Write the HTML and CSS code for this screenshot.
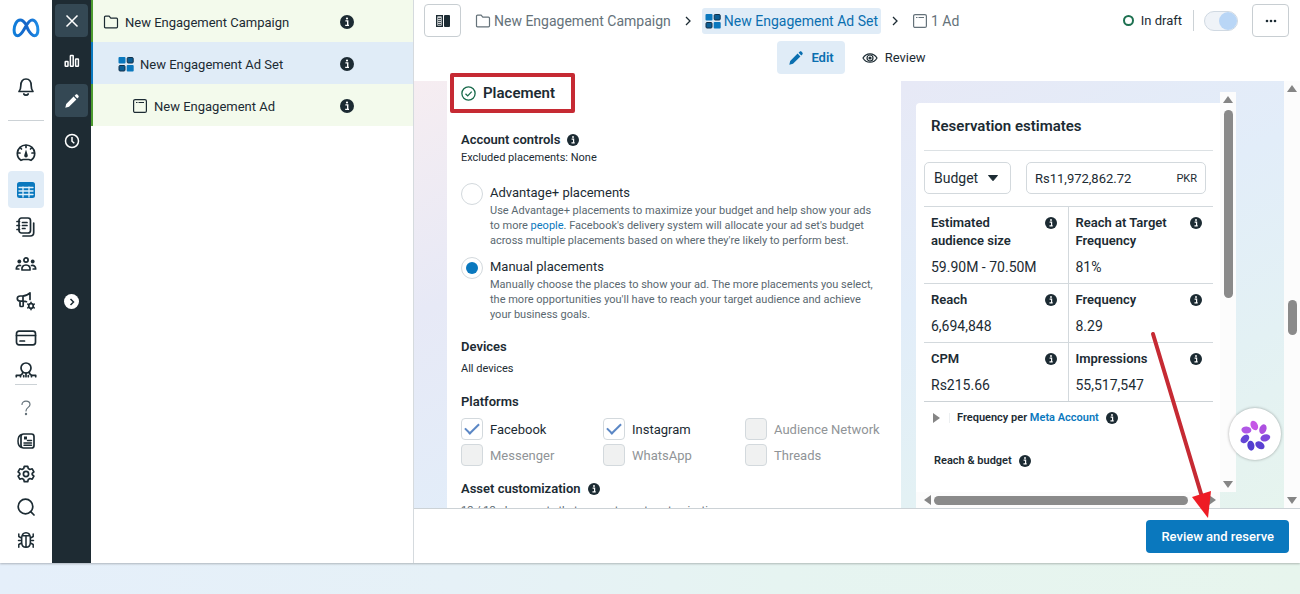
FILE: index.html
```html
<!DOCTYPE html>
<html lang="en">
  <head>
    <meta charset="UTF-8" />
    <title>Ads Manager - New Engagement Ad Set</title>
    <link rel="stylesheet" href="styles.css">
  </head>
  <body>
    <!-- shared icons -->
    <svg class="sprite" aria-hidden="true">
      <symbol id="i-info" viewBox="0 0 14 14">
        <circle cx="7" cy="7" r="7" fill="currentColor" />
        <path d="M5.4 5.9h2.3v4.3M5.2 10.4h3.8" fill="none" stroke="#fff" stroke-width="1.4" />
        <circle cx="7" cy="3.5" r="1.1" fill="#fff" />
      </symbol>
      <symbol id="i-folder" viewBox="0 0 16 16">
        <path d="M1.5 3.2c0-.7.4-1 1-1h3.600l1.700 2h5.700c.7 0 1 .4 1 1v7.600c0 .7-.4 1-1 1h-11c-.7 0-1-.4-1-1z" fill="none" stroke="currentColor" stroke-width="1.2" />
      </symbol>
      <symbol id="i-grid" viewBox="0 0 16 16">
        <rect x=".5" y="1" width="7" height="6.500" rx="1" fill="#0a78be" />
        <rect x="9.200" y="1.500" width="6" height="5.500" rx="1" fill="#0a5d94" stroke="#12304a" />
        <rect x="1" y="9.500" width="6" height="5.500" rx="1" fill="#0a5d94" stroke="#12304a" />
        <rect x="8.700" y="9" width="7" height="6.500" rx="1" fill="#0a78be" />
      </symbol>
      <symbol id="i-ad" viewBox="0 0 16 16">
        <rect x="1.600" y="1.600" width="12.800" height="12.800" rx="1.500" fill="none" stroke="currentColor" stroke-width="1.200" />
        <path d="M4 4.500h1.500M6.500 4.500H12" stroke="currentColor" stroke-width="1.200" />
      </symbol>
      <symbol id="i-pencil" viewBox="0 0 16 16">
        <path d="M1.300 14.700l.9-3.700 7.400-7.400 2.800 2.800L5 13.800zM10.600 2.700l1-1c.6-.6 1.400-.6 2 0l.7.7c.6.600.6 1.400 0 2l-1 1z" fill="currentColor" />
      </symbol>
    </svg>

    <div class="app">
      <nav class="rail" aria-label="Main">
        <a class="rail-logo" href="#" aria-label="Meta">
          <svg width="28" height="20" viewBox="0 0 28 20" fill="none" stroke-width="3" stroke-linecap="round">
            <defs>
              <linearGradient id="meta" x1="0" x2="1">
                <stop offset="0" stop-color="#1180dc" />
                <stop offset=".5" stop-color="#1663c7" />
                <stop offset="1" stop-color="#1d8ce6" />
              </linearGradient>
            </defs>
            <path d="M14 6.500C12.200 3.700 10.400 2 8.200 2 4.600 2 2.100 7.200 2.100 12c0 3.500 1.300 5.700 3.700 5.700 2.300 0 3.800-2 6.200-6.200l2-3.400c2.300-4 4-6.100 6.200-6.100 3.400 0 5.700 5 5.700 10 0 3.500-1.200 5.700-3.600 5.700-2.300 0-3.700-1.700-6.300-6.200z" stroke="url(#meta)" />
          </svg>
        </a>
        <a class="rail-bell" href="#" aria-label="Notifications">
          <svg width="20" height="20" viewBox="0 0 20 20"><path d="M3 14.500c1.400-1.500 1.800-3 1.800-5.700C4.800 4.500 6.800 2 10 2s5.200 2.500 5.200 6.800c0 2.700.4 4.200 1.800 5.700z" /><path d="M7.800 17c.8 1.600 3.600 1.600 4.400 0" /></svg>
        </a>
        <hr class="rail-line">
        <a class="rail-item" href="#" aria-label="Overview">
          <svg width="20" height="20" viewBox="0 0 20 20"><path d="M5 17.300c-2-1.300-3.700-3.600-3.700-7A8.600 8.600 0 0 1 10 2a8.600 8.600 0 0 1 8.700 8.300c0 3.400-1.700 5.700-3.700 7l-2.200-.8H7.200z" /><path d="M10 2.500v2M2 10h2M16 10h2M4.500 5l1 1M15.500 5l-1 1" /><path d="M10 6.500l1.700 5.500a1.800 1.800 0 1 1-3.400 0z" fill="currentColor" stroke="none" /></svg>
        </a>
        <a class="rail-item active" href="#" aria-label="Campaigns">
          <svg width="20" height="18" viewBox="0 0 20 18"><rect x="1" y="1" width="18" height="16" rx="2.500" fill="currentColor" stroke="none" /><path d="M3 6.500h14M3 10h14M3 13.500h14M7 6v10M13 6v10" stroke="#dff0fb" stroke-width="1.300" /></svg>
        </a>
        <a class="rail-item" href="#" aria-label="Reports">
          <svg width="20" height="20" viewBox="0 0 20 20"><rect x="3" y="1" width="11.500" height="15" rx="2.500" /><path d="M1 4.500h2.500M1 8.500h2.500M1 12.500h2.500M6.500 5.500H11M6.500 8.500H11M6.500 11.500H9M17.700 6v9.500c0 2.300-1.300 3.500-3.500 3.500H7" /></svg>
        </a>
        <a class="rail-item" href="#" aria-label="Audiences">
          <svg width="22" height="16" viewBox="0 0 22 16"><circle cx="11" cy="4" r="2.100" /><path d="M7 14c-.5-3 1-5 4-5s4.500 2 4 5z" /><circle cx="4.300" cy="5.500" r="1.900" fill="currentColor" stroke="none" /><circle cx="17.700" cy="5.500" r="1.900" fill="currentColor" stroke="none" /><path d="M5.500 9.500C3 9 1.300 10.300 1.300 13h2.500M16.500 9.500c2.500-.5 4.200.8 4.200 3.500h-2.500" /></svg>
        </a>
        <a class="rail-item" href="#" aria-label="Ads settings">
          <svg width="20" height="20" viewBox="0 0 20 20"><path d="M14 8.500V1.800C11.500 4.200 9.500 5 6.500 5H4.200C2.500 5 1.300 6 1.300 7.500s1.200 2.600 2.900 2.600h3.500c1 0 1.900.2 2.800.6M7 5v5M4 10.300v4.200c0 .7.500 1 1 1h1.200c.6 0 1-.4 1-1v-4.200" /><circle cx="15" cy="15" r="2.300" /><path d="M15 11.200v7.600M11.700 13.100l6.600 3.800M11.700 16.900l6.600-3.800" stroke-width="1.500" /><circle cx="15" cy="15" r="1.400" fill="#fff" stroke="none" /></svg>
        </a>
        <a class="rail-item" href="#" aria-label="Billing">
          <svg width="22" height="16" viewBox="0 0 22 16"><rect x="1.500" y="1.200" width="19" height="13.600" rx="2.500" /><path d="M1.500 5.500h19M5 11h4.500" /></svg>
        </a>
        <a class="rail-audience" href="#" aria-label="Insights">
          <svg width="22" height="18" viewBox="0 0 22 18"><circle cx="11" cy="7" r="5" /><path d="M1.300 15.700v-1.400h3.200c1.800 0 2.800-1 3.200-2.700M5.500 14.300v1.400M11 12v3.700M8.700 14.500v1.200M13.300 14.500v1.200M20.700 15.700v-1.400h-3.200c-1.800 0-2.800-1-3.200-2.700M16.500 14.300v1.400" /></svg>
        </a>
        <hr class="rail-line short">
        <a class="rail-small help" href="#" aria-label="Help">
          <svg width="14" height="16" viewBox="0 0 14 16"><path d="M3 4.500C3 2.500 4.700 1.200 7 1.200s4 1.300 4 3.300C11 7.500 7 7.300 7 11" /><circle cx="7" cy="14" r=".6" /></svg>
        </a>
        <a class="rail-small" href="#" aria-label="News">
          <svg width="20" height="18" viewBox="0 0 20 18"><rect x="5" y="2" width="13" height="14" rx="2.500" /><path d="M5.500 2.500C3 3.500 2 5.500 2 9s1 5.500 3.500 6.500M11.500 8.500h4M8 11h7.500M8 13.200h7.500" stroke-width="1.500" /><rect x="8" y="4.500" width="3" height="3" fill="currentColor" stroke="none" /></svg>
        </a>
        <a class="rail-small" href="#" aria-label="Settings">
          <svg width="18" height="18" viewBox="0 0 18 18"><path d="M7.300 1.300h3.400l.6 2.300 1.600.9 2.300-.7 1.700 3-1.700 1.600v1.200l1.700 1.600-1.700 3-2.300-.7-1.600.9-.6 2.300H7.300l-.6-2.300-1.600-.9-2.300.7-1.700-3 1.700-1.600V8.400L1.100 6.800l1.700-3 2.300.7 1.600-.9z" /><circle cx="9" cy="9" r="2.600" /></svg>
        </a>
        <a class="rail-small" href="#" aria-label="Search">
          <svg width="18" height="18" viewBox="0 0 18 18"><circle cx="8.500" cy="8.500" r="7.300" /><path d="M13.700 13.700l3.300 3.300" /></svg>
        </a>
        <a class="rail-small" href="#" aria-label="Report a bug">
          <svg width="18" height="18" viewBox="0 0 18 18"><path d="M4.700 7c0-3.500 1.700-5.300 4.300-5.300S13.300 3.500 13.300 7v4.500c0 3-1.700 4.800-4.300 4.800s-4.300-1.800-4.300-4.800zM9 5v11M6 4.800h6M4.500 7L1.800 5.500V3M4.500 9.500h-3M4.500 12l-2.700 1.500v2.800M13.500 7l2.700-1.500V3M13.500 9.500h3M13.500 12l2.700 1.500v2.800" stroke-width="1.500" /></svg>
        </a>
      </nav>

      <div class="tools">
        <button class="tool on" aria-label="Close">
          <svg width="14" height="14" viewBox="0 0 14 14" fill="none" stroke="currentColor" stroke-width="1.500"><path d="M1.500 1.500l11 11M12.500 1.500l-11 11" /></svg>
        </button>
        <button class="tool" aria-label="Charts">
          <svg width="16" height="14" viewBox="0 0 16 14" fill="none" stroke="currentColor" stroke-width="1.500"><rect x="1.200" y="7.500" width="2.800" height="4.700" rx=".5" /><rect x="6.400" y="1.500" width="2.800" height="10.700" rx=".5" /><rect x="11.600" y="5" width="2.800" height="7.200" rx=".5" /></svg>
        </button>
        <button class="tool on" aria-label="Edit">
          <svg width="16" height="16"><use href="#i-pencil" /></svg>
        </button>
        <button class="tool" aria-label="History">
          <svg width="16" height="16" viewBox="0 0 16 16" fill="none" stroke="currentColor" stroke-width="1.500"><circle cx="8" cy="8" r="6.500" /><path d="M8 4v4.200l2.300 2" /></svg>
        </button>
        <button class="expand" aria-label="Expand">
          <svg width="8" height="8" viewBox="0 0 8 8" fill="none" stroke="currentColor" stroke-width="1.500"><path d="M2.500 1l3 3-3 3" /></svg>
        </button>
      </div>

      <aside class="tree">
        <a class="tree-row" href="#">
          <svg width="16" height="16"><use href="#i-folder" /></svg>
          <span>New Engagement Campaign</span>
          <svg class="info" width="14" height="14"><use href="#i-info" /></svg>
        </a>
        <a class="tree-row level-2 selected" href="#">
          <svg width="16" height="16"><use href="#i-grid" /></svg>
          <span>New Engagement Ad Set</span>
          <svg class="info" width="14" height="14"><use href="#i-info" /></svg>
        </a>
        <a class="tree-row level-3" href="#">
          <svg width="16" height="16"><use href="#i-ad" /></svg>
          <span>New Engagement Ad</span>
          <svg class="info" width="14" height="14"><use href="#i-info" /></svg>
        </a>
      </aside>

      <main class="main">
        <header class="topbar">
          <button class="icon-btn" aria-label="Toggle panel">
            <svg width="14" height="12" viewBox="0 0 14 12"><rect x=".7" y=".7" width="5.600" height="10.600" fill="none" stroke="#1c2b33" stroke-width="1.400" /><path d="M2 3.300h3M2 5.300h3M2 7.300h3M2 9.300h3" stroke="#1c2b33" /><rect x="8" width="6" height="12" rx="1" fill="#1c2b33" /></svg>
          </button>
          <nav class="crumbs" aria-label="Breadcrumb">
            <a href="#"><svg width="16" height="16"><use href="#i-folder" /></svg>New Engagement Campaign</a>
            <svg class="sep" width="8" height="10" viewBox="0 0 8 10"><path d="M2 1l4 4-4 4" /></svg>
            <a class="current" href="#"><svg width="16" height="16"><use href="#i-grid" /></svg>New Engagement Ad Set</a>
            <svg class="sep" width="8" height="10" viewBox="0 0 8 10"><path d="M2 1l4 4-4 4" /></svg>
            <a href="#"><svg width="16" height="16"><use href="#i-ad" /></svg>1 Ad</a>
          </nav>
          <div class="status">
            <span class="draft">In draft</span>
            <input class="switch" type="checkbox" role="switch" aria-label="Ad set on" checked>
            <button class="icon-btn" aria-label="More">
              <svg width="12" height="4" viewBox="0 0 12 4" fill="#1c2b33"><circle cx="2" cy="2" r="1.300" /><circle cx="6" cy="2" r="1.300" /><circle cx="10" cy="2" r="1.300" /></svg>
            </button>
          </div>
        </header>
        <div class="tabs">
          <button class="tab active"><svg width="16" height="16"><use href="#i-pencil" /></svg>Edit</button>
          <button class="tab"><svg width="16" height="16" viewBox="0 0 16 16" fill="none" stroke="currentColor" stroke-width="1.200"><path d="M1 8c1.500-2.700 4-4.200 7-4.200S13.500 5.300 15 8c-1.500 2.700-4 4.200-7 4.200S2.500 10.700 1 8z" /><circle cx="8" cy="8" r="3" /><circle cx="8" cy="8" r="1" fill="currentColor" /></svg>Review</button>
        </div>

        <div class="workspace">
          <div class="canvas">
            <section class="form">
              <h2><svg width="15" height="15" viewBox="0 0 15 15" fill="none" stroke="#17694a" stroke-width="1.300"><circle cx="7.500" cy="7.500" r="6.600" /><path d="M4.500 7.700l2.200 2.200 4-4.300" /></svg>Placement</h2>

              <h3>Account controls <svg width="12" height="12"><use href="#i-info" /></svg></h3>
              <p class="note">Excluded placements: None</p>

              <div class="option first">
                <input type="radio" name="placement" id="advantage">
                <div>
                  <label for="advantage">Advantage+ placements</label>
                  <p>Use Advantage+ placements to maximize your budget and help show your ads to more <a href="#">people</a>. Facebook's delivery system will allocate your ad set's budget across multiple placements based on where they're likely to perform best.</p>
                </div>
              </div>
              <div class="option">
                <input type="radio" name="placement" id="manual" checked>
                <div>
                  <label for="manual">Manual placements</label>
                  <p>Manually choose the places to show your ad. The more placements you select, the more opportunities you'll have to reach your target audience and achieve your business goals.</p>
                </div>
              </div>

              <h3 class="devices">Devices</h3>
              <p class="note spaced">All devices</p>

              <h3 class="platforms">Platforms</h3>
              <div class="checks">
                <label><input type="checkbox" checked>Facebook</label>
                <label><input type="checkbox" checked>Instagram</label>
                <label><input type="checkbox" disabled>Audience Network</label>
                <label><input type="checkbox" disabled>Messenger</label>
                <label><input type="checkbox" disabled>WhatsApp</label>
                <label><input type="checkbox" disabled>Threads</label>
              </div>

              <h3 class="asset">Asset customization <svg width="12" height="12"><use href="#i-info" /></svg></h3>
              <p class="note muted">12 / 12 placements that support asset customization</p>
            </section>

            <section class="estimates">
              <div class="card">
                <h2>Reservation estimates</h2>
                <div class="budget">
                  <div class="select">
                    <select aria-label="Estimate by"><option>Budget</option><option>Reach</option></select>
                    <svg width="10" height="6" viewBox="0 0 10 6"><path d="M.5.500h9L5 5.700z" fill="#1c2b33" stroke="#1c2b33" stroke-linejoin="round" /></svg>
                  </div>
                  <div class="amount">
                    <input type="text" value="Rs11,972,862.72" aria-label="Budget in PKR">
                    <span>PKR</span>
                  </div>
                </div>
                <dl class="metrics">
                  <div><dt>Estimated audience size <svg width="12" height="12"><use href="#i-info" /></svg></dt><dd>59.90M - 70.50M</dd></div>
                  <div><dt>Reach at Target Frequency <svg width="12" height="12"><use href="#i-info" /></svg></dt><dd>81%</dd></div>
                  <div><dt>Reach <svg width="12" height="12"><use href="#i-info" /></svg></dt><dd>6,694,848</dd></div>
                  <div><dt>Frequency <svg width="12" height="12"><use href="#i-info" /></svg></dt><dd>8.29</dd></div>
                  <div><dt>CPM <svg width="12" height="12"><use href="#i-info" /></svg></dt><dd>Rs215.66</dd></div>
                  <div><dt>Impressions <svg width="12" height="12"><use href="#i-info" /></svg></dt><dd>55,517,547</dd></div>
                </dl>
                <div class="per-account">
                  <button aria-label="Show frequency"><i class="arrow right"></i></button>
                  <strong>Frequency per <a href="#">Meta Account</a></strong>
                  <svg width="12" height="12"><use href="#i-info" /></svg>
                </div>
                <div class="reach-budget"><strong>Reach &amp; budget</strong> <svg width="12" height="12"><use href="#i-info" /></svg></div>
              </div>
              <div class="scroll-y">
                <i class="arrow up"></i>
                <i class="thumb"></i>
                <i class="arrow down"></i>
              </div>
              <div class="scroll-x">
                <i class="arrow left"></i>
                <i class="thumb"></i>
                <i class="arrow right"></i>
              </div>
            </section>
          </div>
          <div class="scroll-y page-scroll">
            <i class="arrow up"></i>
            <i class="thumb"></i>
            <i class="arrow down"></i>
          </div>
        </div>

        <footer class="actions">
          <button class="primary">Review and reserve</button>
        </footer>

        <button class="assistant" aria-label="Assistant">
          <svg width="32" height="34" viewBox="-16 -19 32 34">
            <ellipse cy="-10.500" rx="3.500" ry="5" transform="rotate(-4) rotate(-24 0 -10.500)" fill="#c557e6" />
            <ellipse cy="-10.500" rx="3.500" ry="5" transform="rotate(49) rotate(-28 0 -10.500)" fill="#ad50e0" />
            <ellipse cy="-10.500" rx="3.500" ry="5" transform="rotate(100) rotate(-28 0 -10.500)" fill="#8049dc" />
            <ellipse cy="-10.500" rx="3.500" ry="5" transform="rotate(152) rotate(-30 0 -10.500)" fill="#5a40d2" />
            <ellipse cy="-10.500" rx="3.500" ry="5" transform="rotate(203) rotate(-32 0 -10.500)" fill="#533ed0" />
            <ellipse cy="-10.500" rx="3.500" ry="5" transform="rotate(254) rotate(-28 0 -10.500)" fill="#6546d6" />
            <ellipse cy="-10.500" rx="3.500" ry="5" transform="rotate(305) rotate(-30 0 -10.500)" fill="#b058e6" />
          </svg>
        </button>

        <!-- callouts -->
        <div class="mark-box"></div>
        <svg class="mark-arrow" width="70" height="190" viewBox="0 0 70 190">
          <path d="M5 6l49 163" stroke="#c62a33" stroke-width="4" stroke-linecap="round" />
          <path d="M44 169l19-6-3 27z" fill="#ee1c25" />
        </svg>
      </main>
    </div>
  </body>
</html>
```

FILE: styles.css
```css
*,
*::before,
*::after {
  box-sizing: border-box;
}
body {
  margin: 0;
  height: 100vh;
  padding-bottom: 31px;
  background: linear-gradient(90deg, #e5effa 0%, #e6f1f7 35%, #e6f4f1 60%, #e7f5ed 100%);
  font-family: Roboto, sans-serif;
  font-size: 13px;
  color: #1c2b33;
}
h2,
h3,
p,
dl,
dd {
  margin: 0;
}
a {
  color: #0a78be;
  text-decoration: none;
}
button {
  font: inherit;
  color: inherit;
  border: none;
  background: none;
  padding: 0;
  cursor: pointer;
}
svg {
  flex: none;
}
.sprite {
  position: absolute;
  width: 0;
  height: 0;
}
.app {
  height: 100%;
  display: flex;
  background: #fff;
  box-shadow: 0 1px 2px rgba(0, 0, 0, 0.25);
}

/* left rail */
.rail {
  width: 52px;
  padding-top: 10px;
  display: flex;
  flex-direction: column;
  align-items: center;
  flex: none;
}
.rail a {
  width: 36px;
  display: flex;
  align-items: center;
  justify-content: center;
  color: #1c2b33;
  flex: none;
}
.rail a:not(.rail-logo) svg {
  fill: none;
  stroke: currentColor;
  stroke-width: 1.7;
  stroke-linecap: round;
  stroke-linejoin: round;
}
.rail .rail-logo {
  height: 36px;
}
.rail .rail-bell {
  height: 36px;
  margin-top: 23px;
}
.rail .rail-item {
  height: 37px;
  border-radius: 4px;
}
.rail .rail-item.active {
  background: #e0ecf7;
  color: #0a78be;
}
.rail .rail-audience {
  height: 28px;
}
.rail .rail-small {
  height: 33px;
}
.rail .rail-small.help {
  color: #65727a;
}
.rail .rail-small.help svg {
  stroke-width: 1.2;
}
.rail-line {
  width: 36px;
  margin: 15px 0 13px;
  border: none;
  border-top: 1px solid #ccd2d6;
  flex: none;
}
.rail-line.short {
  width: 22px;
  margin: 0 0 6px;
}

/* dark toolbar */
.tools {
  width: 39px;
  padding-top: 4px;
  background: #1e2b33;
  color: #fff;
  display: flex;
  flex-direction: column;
  align-items: center;
  gap: 7px;
  flex: none;
}
.tool {
  width: 33px;
  height: 33px;
  border-radius: 4px;
  display: flex;
  align-items: center;
  justify-content: center;
}
.tool.on {
  background: #344854;
}
.expand {
  width: 15px;
  height: 15px;
  margin-top: 130px;
  border-radius: 50%;
  background: #fff;
  color: #1c2b33;
  display: flex;
  align-items: center;
  justify-content: center;
}

/* campaign tree */
.tree {
  width: 323px;
  border-right: 1px solid #d5dade;
  flex: none;
}
.tree-row {
  height: 42px;
  padding: 2px 59px 0 10px;
  border-left: 2px solid #4b9b2f;
  background: #f3faec;
  color: #1c2b33;
  display: flex;
  align-items: center;
  gap: 6px;
}
.tree-row span {
  flex: 1;
}
.tree-row.level-2 {
  padding-left: 25px;
}
.tree-row.level-3 {
  padding-left: 39px;
}
.tree-row.selected {
  border-color: #0a78be;
  background: #e0ecf7;
}

/* main column */
.main {
  position: relative;
  flex: 1;
  min-width: 0;
  display: flex;
  flex-direction: column;
}
.topbar {
  height: 41px;
  padding: 0 11px 0 10px;
  display: flex;
  align-items: center;
  flex: none;
}
.icon-btn {
  width: 37px;
  height: 33px;
  border: 1px solid #c8ced2;
  border-radius: 4px;
  display: flex;
  align-items: center;
  justify-content: center;
}
.crumbs {
  margin-left: 11px;
  display: flex;
  align-items: center;
  gap: 10px;
  font-size: 14px;
}
.crumbs a {
  height: 26px;
  padding: 0 3px;
  border-radius: 3px;
  color: #65727a;
  display: flex;
  align-items: center;
  gap: 3px;
}
.crumbs a.current {
  background: #e0ecf7;
  color: #0a6fb0;
}
.sep {
  fill: none;
  stroke: #1c2b33;
  stroke-width: 1.3;
}
.status {
  margin-left: auto;
  display: flex;
  align-items: center;
}
.draft {
  height: 21px;
  padding-right: 11px;
  border-right: 1px solid #ccd2d6;
  display: flex;
  align-items: center;
  gap: 7px;
}
.draft::before {
  content: "";
  width: 11px;
  height: 11px;
  border: 2px solid #1d7050;
  border-radius: 50%;
}
.switch {
  appearance: none;
  width: 34px;
  height: 20px;
  margin: 0 14px 0 10px;
  border: 1px solid #d0d9e2;
  border-radius: 10px;
  background: #eff3f8;
  display: flex;
  justify-content: flex-end;
}
.switch::before {
  content: "";
  width: 18px;
  height: 18px;
  border-radius: 50%;
  background: #b9d6f6;
}
.tabs {
  height: 40px;
  display: flex;
  justify-content: center;
  gap: 6px;
  flex: none;
}
.tab {
  height: 33px;
  padding: 0 11px;
  border-radius: 4px;
  display: flex;
  align-items: center;
  gap: 7px;
}
.tab.active {
  background: #e0ecf7;
  color: #0a6fb0;
  font-weight: 600;
}
.workspace {
  flex: 1;
  min-height: 0;
  display: flex;
}
.canvas {
  flex: 1;
  min-width: 0;
  padding: 0 48px 0 33px;
  display: flex;
  gap: 15px;
  overflow: hidden;
  background: linear-gradient(155deg, #f6edf1 0%, #e7e9f6 28%, #e2edf9 55%, #e3f1f4 78%, #e6f4ee 100%);
}

/* placement form */
.form {
  flex: 1;
  min-width: 0;
  padding: 0 14px;
  background: #fff;
}
.form h2 {
  font-size: 15px;
  line-height: 24px;
  font-weight: 600;
  margin-bottom: 25px;
  display: flex;
  align-items: center;
  gap: 7px;
}
.form h3 {
  font-size: 13px;
  line-height: 20px;
  font-weight: 600;
  display: flex;
  align-items: center;
  gap: 7px;
}
.note {
  font-size: 11px;
  line-height: 15px;
}
.note.spaced {
  margin-top: 4px;
}
.note.muted {
  margin-top: 4px;
  color: #5a6870;
}
.option {
  margin-top: 9px;
  display: flex;
  gap: 7px;
}
.option.first {
  margin-top: 18px;
}
.option label {
  display: block;
  line-height: 20px;
}
.option p {
  padding-right: 8px;
  font-size: 11px;
  line-height: 15px;
  color: #5a6870;
}
.option input,
.checks input {
  appearance: none;
  width: 22px;
  height: 22px;
  margin: 0;
  border: 1px solid #d3d9dd;
  background: #fff;
  display: flex;
  align-items: center;
  justify-content: center;
  flex: none;
}
.option input {
  border-radius: 50%;
}
.option input:checked::before {
  content: "";
  width: 12px;
  height: 12px;
  border-radius: 50%;
  background: #0a78be;
}
.devices {
  margin-top: 15px;
}
.platforms {
  margin-top: 16px;
}
.checks {
  margin-top: 6px;
  display: grid;
  grid-template-columns: repeat(3, 1fr);
  gap: 4px 0;
}
.checks label {
  display: flex;
  align-items: center;
  gap: 7px;
  white-space: nowrap;
}
.checks input {
  border-radius: 4px;
}
.checks input:checked::before {
  content: "";
  width: 14px;
  height: 8px;
  margin-bottom: 4px;
  border: solid #5b87c5;
  border-width: 0 0 2px 2px;
  transform: rotate(-45deg);
}
.checks input:disabled {
  background: #f0f1f1;
}
.checks label:has(:disabled) {
  color: #909497;
}
.asset {
  margin-top: 13px;
}

/* estimates widget */
.estimates {
  width: 320px;
  padding-top: 11px;
  display: grid;
  grid-template-columns: 1fr 16px;
  grid-template-rows: 1fr 16px;
  flex: none;
}
.card {
  margin-top: 11px;
  padding: 0 7px 0 8px;
  min-height: 0;
  overflow: hidden;
  border-radius: 4px 0 0 0;
  background: #fff;
}
.card h2 {
  padding: 0 7px;
  border-bottom: 1px solid #dce1e4;
  font-size: 15px;
  font-weight: 600;
  line-height: 47px;
}
.budget {
  padding: 11px 7px 12px 0;
  display: flex;
  gap: 15px;
}
.select,
.amount {
  height: 32px;
  border: 1px solid #d3d9dd;
  border-radius: 5px;
  display: flex;
  align-items: center;
}
.select {
  width: 87px;
  padding: 0 12px 0 9px;
  font-size: 14px;
}
.select select {
  appearance: none;
  flex: 1;
  min-width: 0;
  padding: 0;
  border: none;
  background: none;
  font: inherit;
  color: inherit;
}
.amount {
  flex: 1;
  min-width: 0;
  padding: 0 8px;
}
.amount input {
  flex: 1;
  min-width: 0;
  padding: 0;
  border: none;
  font: inherit;
  color: inherit;
}
.amount span {
  font-size: 11px;
}
.metrics {
  display: grid;
  grid-template-columns: 1fr 1fr;
  border-bottom: 1px solid #ccd2d6;
  font-size: 13px;
  line-height: 18px;
}
.metrics > div {
  padding: 7px 11px 7px 7px;
  border-top: 1px solid #d3d9dd;
}
.metrics > div:nth-child(odd) {
  border-right: 1px solid #d3d9dd;
}
.metrics dt {
  font-weight: 600;
  display: flex;
  justify-content: space-between;
  gap: 12px;
}
.metrics dt svg {
  margin-top: 3px;
}
.metrics dd {
  margin-top: 8px;
  font-size: 14px;
}
.per-account,
.reach-budget {
  font-size: 11px;
  line-height: 16px;
  display: flex;
  align-items: center;
  gap: 7px;
}
.per-account {
  margin-top: 8px;
  padding-left: 9px;
}
.per-account button {
  width: 17px;
  border-right: 1px solid #eceff1;
  display: flex;
}
.reach-budget {
  margin-top: 27px;
  padding-left: 10px;
}
.per-account strong,
.reach-budget strong {
  font-weight: 600;
}

/* scrollbars */
.arrow {
  width: 0;
  height: 0;
  border: 5px solid transparent;
  flex: none;
}
.arrow.up {
  border-top: none;
  border-bottom: 7px solid #858585;
}
.arrow.down {
  border-bottom: none;
  border-top: 7px solid #858585;
}
.arrow.left {
  border-left: none;
  border-right: 7px solid #858585;
}
.arrow.right {
  border-right: none;
  border-left: 7px solid #858585;
}
.thumb {
  border-radius: 5px;
  background: #8a8a8a;
}
.scroll-y {
  width: 16px;
  padding: 4px 0;
  background: #fcfcfc;
  display: flex;
  flex-direction: column;
  align-items: center;
  flex: none;
}
.scroll-y .thumb {
  width: 9px;
  height: 48%;
  margin: 7px 0 auto;
}
.scroll-x {
  padding: 0 4px 0 8px;
  background: #fcfcfc;
  display: flex;
  align-items: center;
  gap: 3px;
}
.scroll-x .thumb {
  width: 254px;
  height: 9px;
  margin-right: auto;
}
.page-scroll .thumb {
  height: 35px;
  margin: auto 0 162px;
}

.actions {
  height: 55px;
  padding-right: 11px;
  border-top: 1px solid #ccd2d6;
  display: flex;
  align-items: center;
  justify-content: flex-end;
  flex: none;
}
.primary {
  height: 33px;
  padding: 0 15px;
  border-radius: 4px;
  background: #0a78be;
  color: #fff;
  font-weight: 500;
}
.assistant {
  position: absolute;
  right: 19px;
  bottom: 103px;
  width: 52px;
  height: 52px;
  border-radius: 50%;
  background: #fff;
  box-shadow: 0 0 3px rgba(0, 0, 0, 0.35);
  display: flex;
  align-items: center;
  justify-content: center;
}

/* callouts drawn over the page */
.mark-box {
  position: absolute;
  top: 73px;
  left: 36px;
  width: 125px;
  height: 40px;
  border: 4px solid #c62a33;
  border-radius: 2px;
  pointer-events: none;
}
.mark-arrow {
  position: absolute;
  right: 82px;
  bottom: 45px;
  pointer-events: none;
}
```
